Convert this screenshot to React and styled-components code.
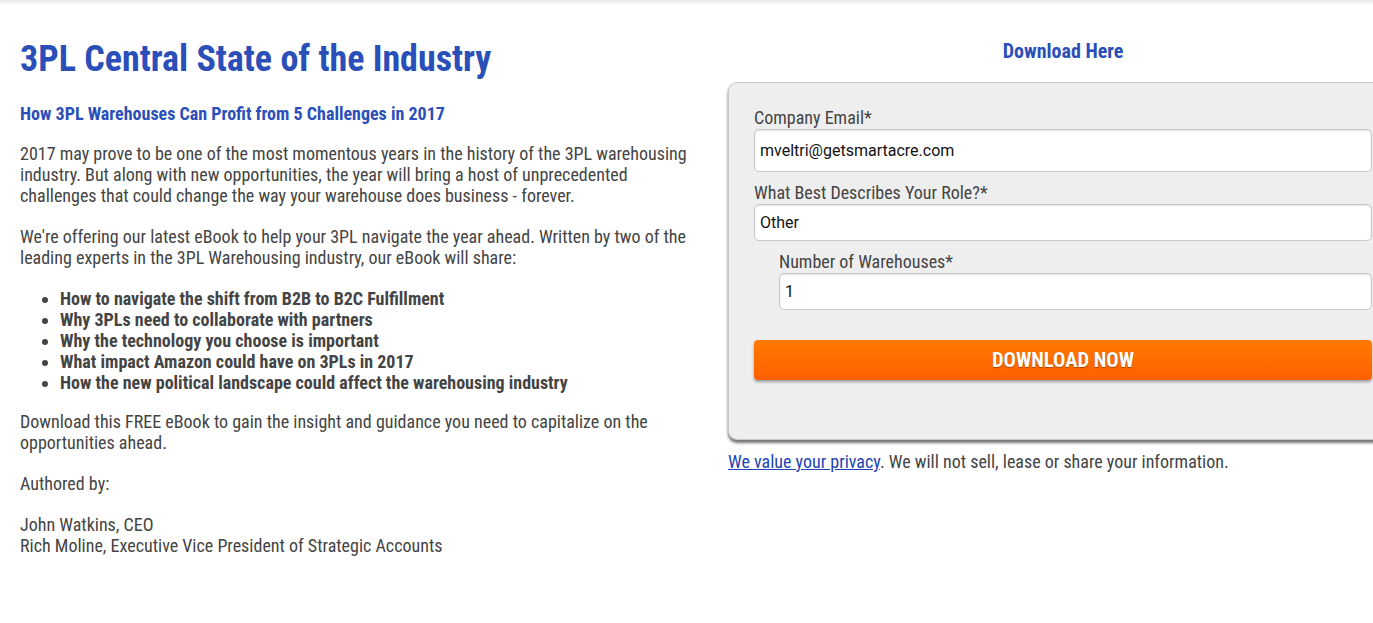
import React from "react";
import styled, { createGlobalStyle } from "styled-components";

const GlobalStyle = createGlobalStyle`
  html, body { margin: 0; padding: 0; background: #fff; }
  body {
    overflow: hidden;
    font-family: "Roboto Condensed", Roboto, "Liberation Sans Narrow", sans-serif;
    font-stretch: condensed;
    color: #444;
  }
  * { box-sizing: border-box; }
`;

const blue = "#2b4fb9";

const TopShade = styled.div`
  height: 5px;
  background: linear-gradient(#e9e9e9, #ffffff);
`;

const Page = styled.div`
  display: flex;
  align-items: flex-start;
  gap: 28px;
  padding: 0 0 0 20px;
  width: 1420px;
`;

const Main = styled.main`
  width: 680px;
  flex: none;
  padding-top: 33px;
`;

const Title = styled.h1`
  margin: 0;
  font-size: 36px;
  line-height: 42px;
  font-weight: 700;
  color: ${blue};
`;

const Subtitle = styled.h2`
  margin: 22px 0 17px;
  font-size: 18px;
  line-height: 24px;
  font-weight: 700;
  color: ${blue};
`;

const P = styled.p`
  margin: 0 0 20px;
  font-size: 18px;
  line-height: 21px;
  color: #444;
`;

const List = styled.ul`
  margin: 0 0 18px;
  padding-left: 40px;
`;

const Item = styled.li`
  font-size: 18px;
  line-height: 21px;
  font-weight: 700;
  color: #444;
`;

const Aside = styled.aside`
  width: 670px;
  flex: none;
  padding-top: 34px;
`;

const FormHeading = styled.h3`
  margin: 0 0 19px;
  text-align: center;
  font-size: 20px;
  line-height: 24px;
  font-weight: 700;
  color: ${blue};
`;

const FormCard = styled.form`
  background: #eeeeee;
  border: 1px solid #c9c9c9;
  border-radius: 9px;
  padding: 24px 25px 59px;
  box-shadow: 0 3px 3px rgba(0, 0, 0, 0.55);
`;

const Field = styled.div`
  display: flex;
  flex-direction: column;
  margin: 0 0 10px ${(p) => (p.$indent ? "25px" : "0")};
  width: ${(p) => (p.$indent ? "593px" : "618px")};
`;

const Label = styled.label`
  font-size: 18px;
  line-height: 22px;
  color: #444;
`;

const Input = styled.input`
  height: ${(p) => (p.$tall ? "43px" : "37px")};
  border: 1px solid #c8c8c8;
  border-radius: 5px;
  background: #fff;
  box-shadow: inset 0 1px 2px rgba(0, 0, 0, 0.12);
  padding: 0 5px;
  font-family: Roboto, "Liberation Sans", sans-serif;
  font-stretch: normal;
  font-size: 16px;
  color: #111;
  outline: none;
`;

const Button = styled.button`
  display: block;
  width: 618px;
  height: 40px;
  margin-top: 30px;
  border: none;
  border-radius: 4px;
  background: linear-gradient(#ff7a00, #ff5f00);
  box-shadow: 0 2px 3px rgba(0, 0, 0, 0.35);
  color: #fff;
  font-family: "Roboto Condensed", Roboto, sans-serif;
  font-stretch: condensed;
  font-size: 20.5px;
  font-weight: 700;
  text-shadow: 0 1px 1px rgba(0, 0, 0, 0.35);
  cursor: pointer;
`;

const Privacy = styled.p`
  margin: 11px 0 0;
  font-size: 18px;
  line-height: 22px;
  color: #444;
`;

const PrivacyLink = styled.a`
  color: #1e44b4;
  text-decoration: underline;
`;

export default function App() {
  return (
    <>
      <GlobalStyle />
      <TopShade />
      <Page>
        <Main>
          <Title>3PL Central State of the Industry</Title>
          <Subtitle>How 3PL Warehouses Can Profit from 5 Challenges in 2017</Subtitle>
          <P>
            2017 may prove to be one of the most momentous years in the history of the 3PL warehousing
            industry. But along with new opportunities, the year will bring a host of unprecedented
            challenges that could change the way your warehouse does business - forever.
          </P>
          <P>
            We're offering our latest eBook to help your 3PL navigate the year ahead. Written by two of the
            leading experts in the 3PL Warehousing industry, our eBook will share:
          </P>
          <List>
            <Item>How to navigate the shift from B2B to B2C Fulfillment</Item>
            <Item>Why 3PLs need to collaborate with partners</Item>
            <Item>Why the technology you choose is important</Item>
            <Item>What impact Amazon could have on 3PLs in 2017</Item>
            <Item>How the new political landscape could affect the warehousing industry</Item>
          </List>
          <P>
            Download this FREE eBook to gain the insight and guidance you need to capitalize on the
            opportunities ahead.
          </P>
          <P>Authored by:</P>
          <P>
            John Watkins, CEO
            <br />
            Rich Moline, Executive Vice President of Strategic Accounts
          </P>
        </Main>
        <Aside>
          <FormHeading>Download Here</FormHeading>
          <FormCard onSubmit={(e) => e.preventDefault()}>
            <Field>
              <Label>Company Email*</Label>
              <Input $tall type="email" defaultValue="mveltri@getsmartacre.com" />
            </Field>
            <Field>
              <Label>What Best Describes Your Role?*</Label>
              <Input defaultValue="Other" />
            </Field>
            <Field $indent>
              <Label>Number of Warehouses*</Label>
              <Input defaultValue="1" />
            </Field>
            <Button type="submit">DOWNLOAD NOW</Button>
          </FormCard>
          <Privacy>
            <PrivacyLink href="#">We value your privacy</PrivacyLink>. We will not sell, lease or share your
            information.
          </Privacy>
        </Aside>
      </Page>
    </>
  );
}
